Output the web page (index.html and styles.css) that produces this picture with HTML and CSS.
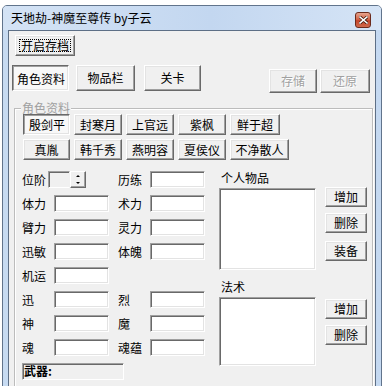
FILE: index.html
```html
<!DOCTYPE html>
<html lang="zh">
<head>
<meta charset="utf-8">
<title>天地劫-神魔至尊传 by子云</title>
<link rel="stylesheet" href="styles.css">
</head>
<body>
<div class="window">
  <div class="titlebar">
    <span class="title">天地劫-神魔至尊传 by子云</span>
    <span class="close"><svg width="9" height="8" viewBox="0 0 9 8"><path d="M1 1 L8 7 M8 1 L1 7" stroke="#3a1408" stroke-width="3" stroke-linecap="square"/><path d="M1 1 L8 7 M8 1 L1 7" stroke="#fff" stroke-width="1.6" stroke-linecap="square"/></svg></span>
  </div>
  <div class="client">
    <div class="row-open"><div class="btn focus w-open">开启存档</div></div>
    <div class="tabrow">
      <div class="btn tab pressed w-tab1">角色资料</div>
      <div class="btn tab w-tab2">物品栏</div>
      <div class="btn tab w-tab3">关卡</div>
      <div class="spacer"></div>
      <div class="btn disabled w-save">存储</div>
      <div class="btn disabled w-restore">还原</div>
    </div>
    <div class="group">
      <span class="legend">角色资料</span>
      <div class="chars">
        <div class="btn cb pressed">殷剑平</div>
        <div class="btn cb">封寒月</div>
        <div class="btn cb">上官远</div>
        <div class="btn cb">紫枫</div>
        <div class="btn cb w-c5">鲜于超</div>
        <div class="btn cb">真胤</div>
        <div class="btn cb">韩千秀</div>
        <div class="btn cb">燕明容</div>
        <div class="btn cb">夏侯仪</div>
        <div class="btn cb w-c10">不净散人</div>
      </div>
      <div class="form">
        <div class="stats">
          <div class="rank">
            <span class="lbl">位阶</span>
            <span class="spinbox"></span>
            <span class="spinner">
              <svg width="14" height="15" viewBox="0 0 14 15"><path d="M7 3 L9 5 L5 5 Z" fill="#000"/><path d="M5 10 L9 10 L7 12 Z" fill="#000"/></svg>
            </span>
          </div>
          <span class="lbl c2">历练</span><span class="edit"></span>
          <span class="lbl">体力</span><span class="edit"></span>
          <span class="lbl c2">术力</span><span class="edit"></span>
          <span class="lbl">臂力</span><span class="edit"></span>
          <span class="lbl c2">灵力</span><span class="edit"></span>
          <span class="lbl">迅敏</span><span class="edit"></span>
          <span class="lbl c2">体魄</span><span class="edit"></span>
          <span class="lbl">机运</span><span class="edit"></span>
          <span class="lbl c2 full"></span>
          <span class="lbl">迅</span><span class="edit"></span>
          <span class="lbl c2">烈</span><span class="edit"></span>
          <span class="lbl">神</span><span class="edit"></span>
          <span class="lbl c2">魔</span><span class="edit"></span>
          <span class="lbl">魂</span><span class="edit"></span>
          <span class="lbl c2">魂蕴</span><span class="edit"></span>
          <div class="weapon">武器:</div>
        </div>
        <div class="side">
          <div class="section s1">
            <div class="listcol">
              <div class="listlbl">个人物品</div>
              <div class="listbox lb1"></div>
            </div>
            <div class="btncol b1">
              <div class="btn sb">增加</div>
              <div class="btn sb">删除</div>
              <div class="btn sb equip">装备</div>
            </div>
          </div>
          <div class="section s2">
            <div class="listcol">
              <div class="listlbl">法术</div>
              <div class="listbox lb2"></div>
            </div>
            <div class="btncol b2">
              <div class="btn sb">增加</div>
              <div class="btn sb">删除</div>
            </div>
          </div>
        </div>
      </div>
    </div>
  </div>
</div>
</body>
</html>
```

FILE: styles.css
```css
* { box-sizing: border-box; }
html, body { margin: 0; padding: 0; }
body {
  width: 384px;
  height: 386px;
  overflow: hidden;
  background: #fff;
  font-family: "Noto Sans CJK SC", "Noto Sans", sans-serif;
  font-size: 12px;
  line-height: 14px;
  color: #000;
}

.window {
  margin: 5px 0 0 2px;
  width: 380px;
  height: 420px;
  border: 1px solid #61748c;
  border-radius: 5px 5px 0 0;
  background: linear-gradient(to right, #c7dbf2, #bcd3ee 60%, #c5d9f1);
  padding: 0 5px;
  display: flex;
  flex-direction: column;
}

.titlebar {
  height: 24px;
  flex: none;
  display: flex;
  align-items: center;
  background: linear-gradient(to right, #d4e3f5 0%, #c3d7f0 55%, #d5e4f6 100%);
  margin: 0 -5px;
  padding: 0 0 0 8px;
  border-radius: 4px 4px 0 0;
}
.title { flex: 1; color: #000; font-size: 12px; }
.close {
  width: 16px;
  height: 16px;
  margin-right: 10px;
  margin-top: 3px;
  border: 1px solid #6b2a1c;
  border-radius: 3px;
  background: linear-gradient(to bottom, #e6a48e 0%, #d3654a 45%, #c3442a 55%, #cf6a4c 100%);
  display: flex;
  align-items: center;
  justify-content: center;
}

.client {
  flex: 1;
  border: 1px solid #5d6f86;
  background: #f0f0f0;
  padding: 0;
}

/* Classic 3D button */
.btn {
  position: relative;
  display: flex;
  align-items: center;
  justify-content: center;
  background: #f0f0f0;
  border: 1px solid;
  border-color: #fff #696969 #696969 #fff;
  box-shadow: inset -1px -1px 0 #a0a0a0, inset 1px 1px 0 #e3e3e3;
  white-space: nowrap;
  font-size: 12px;
}
.btn.pressed {
  border-color: #696969 #fff #fff #696969;
  box-shadow: inset 1px 1px 0 #a0a0a0, inset -1px -1px 0 #e3e3e3;
  background: #f8f8f8;
  padding-top: 1px;
  padding-left: 1px;
}
.btn.disabled {
  color: #a0a0a0;
  text-shadow: 1px 1px 0 #fff;
}
.btn.focus::after {
  content: "";
  position: absolute;
  left: 3px;
  top: 3px;
  right: 3px;
  bottom: 3px;
  border: 1px dotted #000;
}

.row-open { padding: 4px 0 0 6px; display: flex; }
.w-open { width: 60px; height: 21px; }

.tabrow {
  display: flex;
  align-items: flex-start;
  margin-top: 9px;
  padding-left: 3px;
}
.tab { height: 26px; }
.w-tab1 { width: 57px; }
.w-tab2 { width: 59px; margin-left: 7px; }
.w-tab3 { width: 57px; margin-left: 9px; }
.spacer { flex: 1; }
.w-save { width: 48px; height: 24px; margin-top: 4px; }
.w-restore { width: 50px; height: 24px; margin-top: 4px; margin-left: 3px; margin-right: 5px; }

.group {
  position: relative;
  margin: 15px 0 0 5px;
  width: 359px;
  border: 1px solid #bcbcbc;
  box-shadow: inset 1px 1px 0 #fff, 1px 1px 0 #fff;
  padding: 5px 0 0 7px;
  height: 300px;
}
.legend {
  position: absolute;
  top: -8px;
  left: 6px;
  padding: 0 1px;
  background: #f0f0f0;
  color: #a0a0a0;
  line-height: 14px;
}

.chars {
  display: grid;
  grid-template-columns: 47px 48px 48px 48px auto;
  grid-auto-rows: 21px;
  column-gap: 4px;
  row-gap: 4px;
  margin-left: 1px;
  justify-items: start;
}
.cb { width: 100%; height: 21px; }
.w-c5 { width: 50px; }
.w-c10 { width: 59px; }

.form {
  display: flex;
  align-items: flex-start;
  margin-top: 11px;
}

.stats {
  display: grid;
  grid-template-columns: 32px 55px 9px 32px 55px;
  grid-auto-rows: 17px;
  row-gap: 7px;
  align-items: center;
}
.lbl { grid-column: 1; line-height: 17px; }
.lbl.c2 { grid-column: 4; }
.edit {
  height: 17px;
  background: #fff;
  border: 1px solid;
  border-color: #a0a0a0 #fff #fff #a0a0a0;
  box-shadow: inset 1px 1px 0 #696969, inset -1px -1px 0 #e3e3e3;
}
.rank {
  grid-column: 1 / span 3;
  display: flex;
  align-items: center;
  height: 17px;
}
.rank .lbl { width: 26px; }
.spinbox {
  width: 22px;
  height: 17px;
  background: #f0f0f0;
  border: 1px solid;
  border-color: #a0a0a0 #f0f0f0 #fff #a0a0a0;
  box-shadow: inset 1px 1px 0 #696969;
}
.spinner {
  width: 16px;
  height: 17px;
  background: #f0f0f0;
  border: 1px solid;
  border-color: #fff #696969 #696969 #fff;
  box-shadow: inset -1px -1px 0 #a0a0a0;
  display: flex;
}
.weapon {
  grid-column: 1 / span 2;
  width: 102px;
  height: 17px;
  border: 1px solid;
  border-color: #a0a0a0 #fff #fff #a0a0a0;
  box-shadow: inset 1px 1px 0 #696969;
  background: #f0f0f0;
  line-height: 14px;
  padding-left: 1px;
  font-weight: bold;
}

.side {
  margin-left: 14px;
  display: flex;
  flex-direction: column;
}
.section { display: flex; }
.s2 { margin-top: 10px; }
.listcol { display: flex; flex-direction: column; }
.listlbl { height: 17px; padding-left: 2px; line-height: 14px; }
.listbox {
  width: 97px;
  background: #fff;
  border: 1px solid;
  border-color: #a0a0a0 #fff #fff #a0a0a0;
  box-shadow: inset 1px 1px 0 #696969, inset -1px -1px 0 #e3e3e3;
}
.lb1 { height: 82px; }
.lb2 { height: 69px; }
.btncol {
  display: flex;
  flex-direction: column;
  margin-left: 9px;
  gap: 6px;
}
.b1 { padding-top: 16px; }
.b2 { padding-top: 19px; }
.sb { width: 42px; height: 20px; }
.sb.equip { margin-top: 2px; }
```
